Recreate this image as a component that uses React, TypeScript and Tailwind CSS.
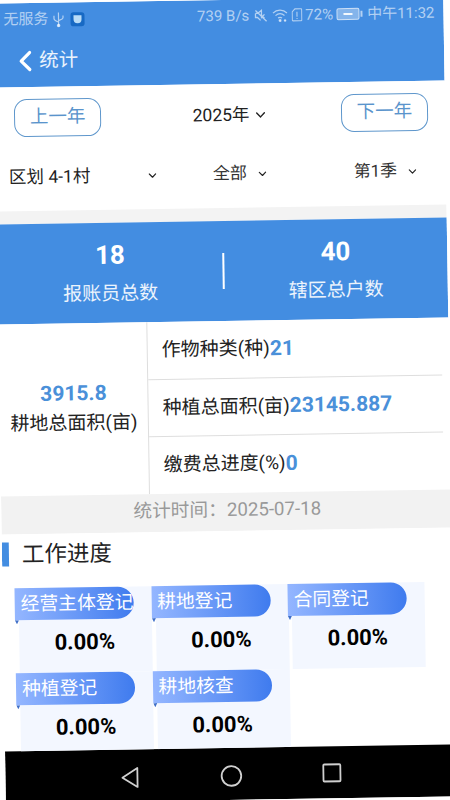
const FONT = "font-['Roboto','Noto_Sans_CJK_SC',sans-serif]";

function Chevron({ size = 10, className = "" }: { size?: number; className?: string }) {
  return (
    <svg width={size} height={size} viewBox="0 0 10 10" fill="none" className={className}>
      <path d="M1.5 3.2 5 6.8 8.5 3.2" stroke="#222" strokeWidth="1.3" strokeLinecap="round" strokeLinejoin="round" />
    </svg>
  );
}

function StatusBar() {
  return (
    <div className="flex h-[32px] items-center justify-between pl-[10px] pr-[9px] text-[15px] text-white/60">
      <div className="flex items-center gap-[6px] pt-[1px]">
        <span className="-mr-[2px]">无服务</span>
        <svg width="12" height="16" viewBox="0 0 12 16" fill="none" stroke="currentColor" strokeWidth="1.2">
          <path d="M6 1v14M1.5 4v3c0 1.5 1 2 4.5 3.5M10.5 4v2c0 1.5-1 2-4.5 3" />
          <circle cx="6" cy="14" r="1.2" fill="currentColor" />
        </svg>
        <div className="flex h-[14px] w-[14px] items-center justify-center rounded-[3px] bg-[#1769c4]">
          <div className="h-[8px] w-[8px] rounded-b-full rounded-t-[3px] bg-[#b9dcf7]" />
        </div>
      </div>
      <div className="flex items-center gap-[3px]">
        <span className="mr-[1px]">739 B/s</span>
        <svg width="15" height="15" viewBox="0 0 15 15" fill="none" stroke="currentColor" strokeWidth="1.3">
          <path d="M2 5h2l4-3v8M11 6l-2 2 2 2M2 2l11 11M2 5v4h2l3 3" />
        </svg>
        <svg width="17" height="14" viewBox="0 0 16 14" fill="none" stroke="currentColor" strokeWidth="1.2">
          <path d="M1 5c4-4 10-4 14 0M3.500 7.500c3-2.500 6-2.500 9 0M6 10c1.500-1 2.500-1 4 0" />
          <circle cx="8" cy="12.500" r="0.9" fill="currentColor" />
          <circle cx="13" cy="12.500" r="0.7" fill="currentColor" />
        </svg>
        <svg width="11" height="14" viewBox="0 0 11 14" fill="none" stroke="currentColor" strokeWidth="1.1">
          <path d="M3.500 1H9.500a.8.8 0 0 1 .8.8v10.400a.8.8 0 0 1-.8.800H1.500a.8.8 0 0 1-.8-.8V4z" />
          <path d="M5.500 4v5M5.500 10.200v1" />
        </svg>
        <span>72%</span>
        <div className="flex items-center gap-[1px]">
          <div className="flex h-[12px] w-[23px] items-center justify-center rounded-[2px] border border-white/60 bg-white/35">
            <div className="h-[2px] w-[9px] bg-white/90" />
          </div>
          <div className="h-[6px] w-[2px] bg-white/60" />
        </div>
        <span className="ml-[2px]">中午11:32</span>
      </div>
    </div>
  );
}

function Header() {
  return (
    <div className="h-[84px] bg-[#438de1]">
      <StatusBar />
      <div className="flex h-[52px] items-center pl-[24px]">
        <svg width="14" height="22" viewBox="0 0 14 22" fill="none">
          <path d="M11.500 2.500 3 11l8.500 8.500" stroke="#fff" strokeWidth="3.200" strokeLinecap="round" strokeLinejoin="round" />
        </svg>
        <span className="ml-[7px] text-[19.500px] text-white/90">统计</span>
      </div>
    </div>
  );
}

function YearButton({ label }: { label: string }) {
  return (
    <button className="flex h-[38px] w-[87px] items-center justify-center rounded-[13px] border-[1.5px] border-[#5f97cc] bg-white text-[18.500px] text-[#5a94cc]">
      {label}
    </button>
  );
}

function Filters() {
  return (
    <div className="h-[124px] bg-white">
      <div className="flex h-[62px] items-center justify-between pl-[19px] pr-[17px]">
        <YearButton label="上一年" />
        <div className="flex items-center gap-[6px] pl-[17px]">
          <span className="text-[17.500px] text-[#222]">2025年</span>
          <Chevron size={11} />
        </div>
        <YearButton label="下一年" />
      </div>
      <div className="flex h-[56px] items-center text-[#222]">
        <div className="flex w-[217px] items-center pl-[13px]">
          <span className="w-[139px] text-[17.500px]">区划 4-1村</span>
          <Chevron size={9} />
        </div>
        <div className="flex w-[141px] items-center">
          <span className="w-[45px] text-[17px] text-[#333]">全部</span>
          <Chevron size={9} />
        </div>
        <div className="flex items-center">
          <span className="w-[54px] text-[16.800px] text-[#333]">第1季</span>
          <Chevron size={9} />
        </div>
      </div>
    </div>
  );
}

function Stats() {
  return (
    <div className="flex h-[100px] items-center bg-[#438de1] text-white">
      <div className="flex flex-1 flex-col items-center pl-[1px]">
        <span className="text-[26px] font-bold leading-[32px]">18</span>
        <span className="mt-[9px] text-[19px] leading-[28px] text-white/90">报账员总数</span>
      </div>
      <div className="h-[36px] w-[2px] bg-white" />
      <div className="flex flex-1 flex-col items-center">
        <span className="text-[26px] font-bold leading-[32px]">40</span>
        <span className="mt-[9px] text-[19px] leading-[28px] text-white/90">辖区总户数</span>
      </div>
    </div>
  );
}

const ROWS = [
  { label: "作物种类(种)", value: "21", height: "h-[58px]" },
  { label: "种植总面积(亩)", value: "23145.887", height: "h-[57px]" },
  { label: "缴费总进度(%)", value: "0", height: "h-[57px]" },
];

function Summary() {
  return (
    <div className="flex h-[172px] bg-white">
      <div className="flex w-[149px] flex-col items-center justify-center border-r border-[#dedede] pb-[3px]">
        <span className="text-[21px] font-bold leading-[30px] text-[#4a90d9]">3915.8</span>
        <span className="text-[19px] leading-[30px] text-[#222]">耕地总面积(亩)</span>
      </div>
      <div className="flex-1 pr-[7px]">
        {ROWS.map((row, i) => (
          <div
            key={row.label}
            className={`flex items-center pl-[14px] text-[19px] text-[#222] ${row.height} ${i < 2 ? "border-b border-[#dedede]" : ""}`}
          >
            <span>{row.label}</span>
            <span className="text-[21px] font-bold text-[#4a90d9]">{row.value}</span>
          </div>
        ))}
      </div>
    </div>
  );
}

const CARDS = ["经营主体登记", "耕地登记", "合同登记", "种植登记", "耕地核查"];

function ProgressCard({ title }: { title: string }) {
  return (
    <div className="relative h-[85px] pl-[4px]">
      <div className="flex h-full w-[133px] justify-center bg-[#f3f7ff] pr-[2px] pt-[41px]">
        <span className="text-[22px] font-bold leading-[28px] text-black">0.00%</span>
      </div>
      <div className="absolute left-0 top-0 flex h-[32px] w-[119px] items-center rounded-r-full bg-gradient-to-r from-[#94b6ff] to-[#3f7bee] pl-[6px] text-[18.800px] whitespace-nowrap text-white">
        {title}
      </div>
      <svg width="4" height="4" viewBox="0 0 4 4" className="absolute left-0 top-[32px]">
        <path d="M0 0h4L2 4z" fill="#3f6fc8" />
      </svg>
    </div>
  );
}

function Progress() {
  return (
    <div className="bg-white">
      <div className="flex h-[54px] items-start pt-[8px]">
        <div className="h-[24px] w-[7px] bg-[#438de1]" />
        <span className="ml-[13px] text-[22.500px] leading-[24px] text-[#222]">工作进度</span>
      </div>
      <div className="grid grid-cols-[136.500px_136.500px_136.500px] pl-[12px]">
        {CARDS.map((c) => (
          <ProgressCard key={c} title={c} />
        ))}
      </div>
    </div>
  );
}

function NavBar() {
  return (
    <div className="flex h-[52px] items-start bg-black pl-[114px] pt-[16px]">
      <svg width="21" height="24" viewBox="0 0 21 24" fill="none">
        <path d="M18 2.500v19L3 12z" stroke="#cfcfcf" strokeWidth="1.800" strokeLinejoin="round" />
      </svg>
      <svg width="24" height="24" viewBox="0 0 24 24" fill="none" className="ml-[79px]">
        <circle cx="12" cy="12" r="9.800" stroke="#cfcfcf" strokeWidth="1.800" />
      </svg>
      <svg width="22" height="22" viewBox="0 0 22 22" fill="none" className="ml-[78px]">
        <rect x="2" y="2" width="17" height="17" rx="1" stroke="#cfcfcf" strokeWidth="1.800" />
      </svg>
    </div>
  );
}

export default function App() {
  return (
    <div className={`h-[800px] w-[450px] overflow-hidden bg-white ${FONT}`}>
      <div className="flex h-[800px] w-[450px] origin-[225px_430px] rotate-[-0.9deg] flex-col overflow-hidden">
        <Header />
        <Filters />
        <div className="h-[13px] bg-[#f3f3f3]" />
        <Stats />
        <Summary />
        <div className="flex h-[38px] items-center justify-center bg-[#f2f2f2] pb-[3px] pl-[2px] text-[18.700px] text-[#999]">
          {"统计时间\uFF1A2025-07-18"}
        </div>
        <div className="h-[217px] overflow-hidden">
          <Progress />
        </div>
        <NavBar />
      </div>
    </div>
  );
}
